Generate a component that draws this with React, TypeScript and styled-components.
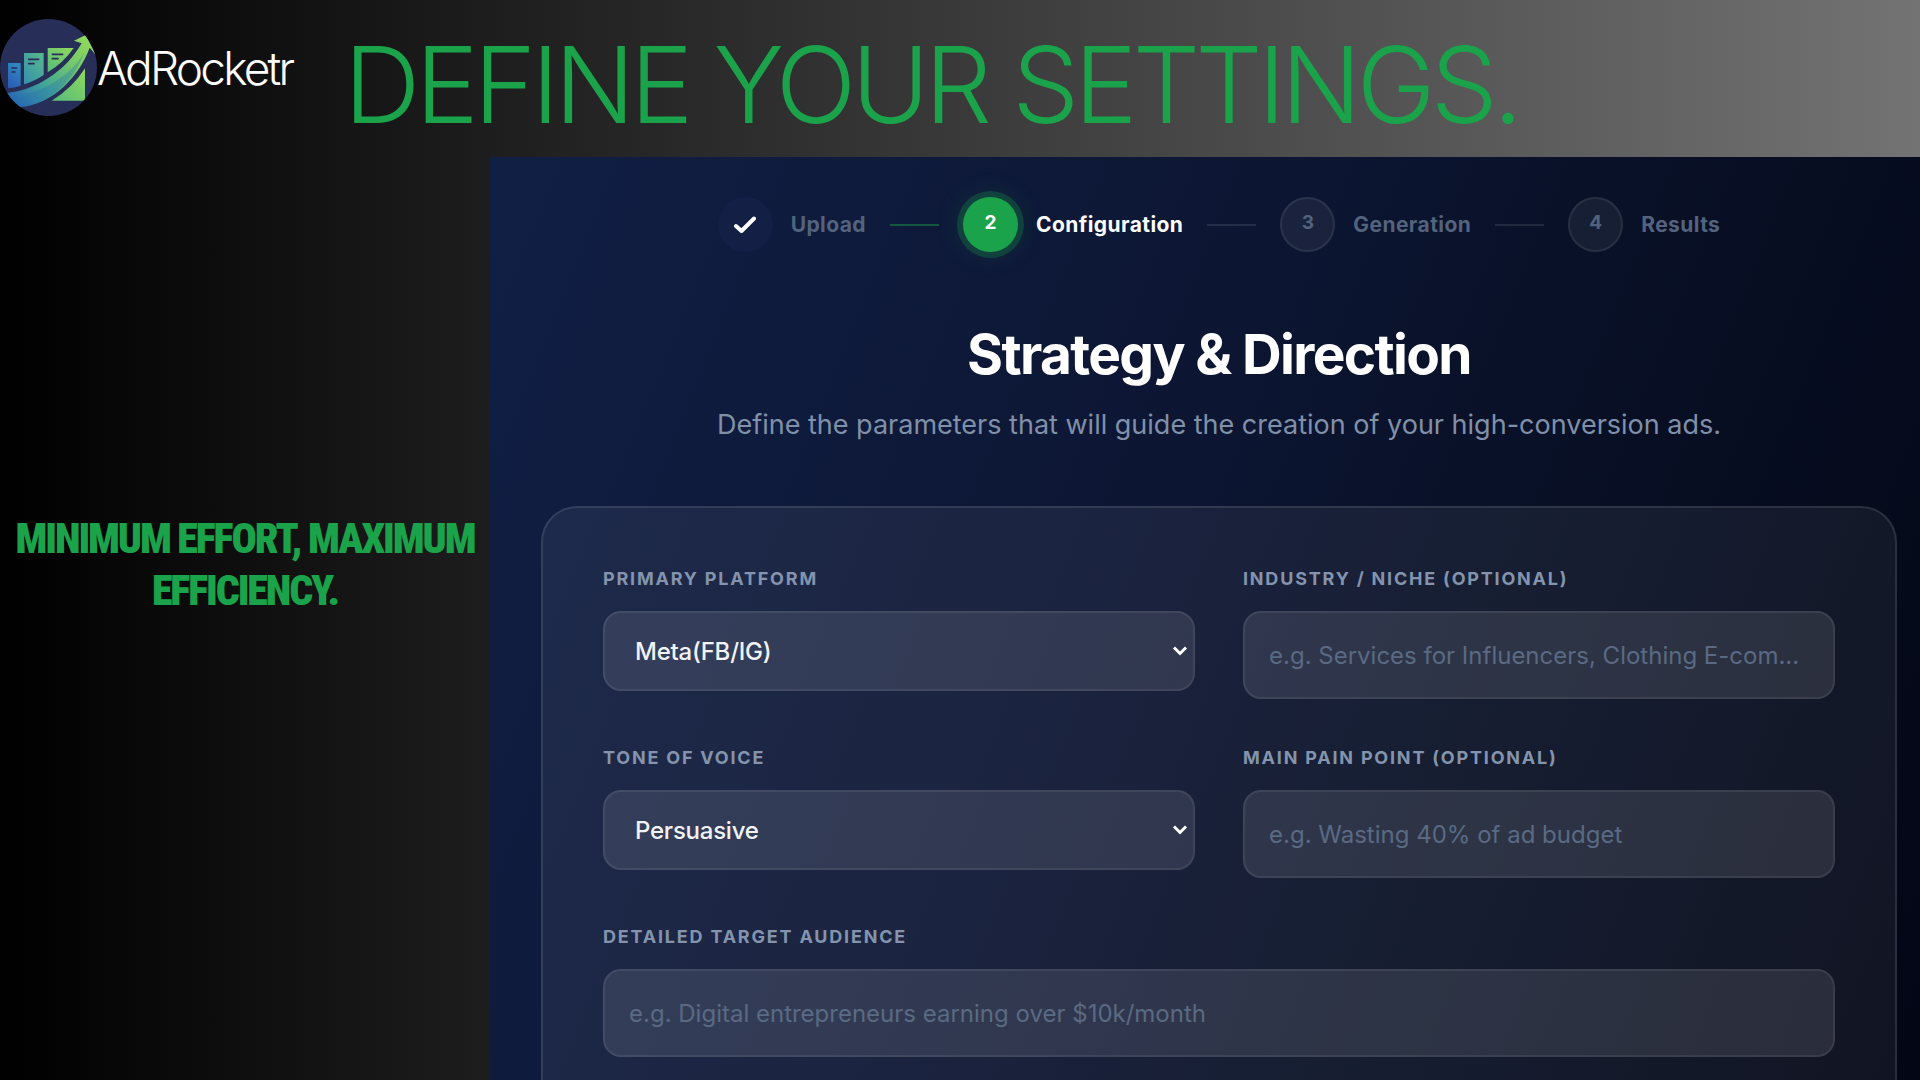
import React from "react";
import styled, { createGlobalStyle, css } from "styled-components";

const sans = `Inter, "Liberation Sans", Arial, sans-serif`;
const green = "#1aa34a";

const GlobalStyle = createGlobalStyle`
  *, *::before, *::after { box-sizing: border-box; }
  body { margin: 0; background: #000; font-family: ${sans}; }
  h1, h2, p { margin: 0; }
`;

const Page = styled.div`
  display: grid;
  grid-template: 157px minmax(0, 1fr) / 490px minmax(0, 1fr);
  height: 100vh;
  overflow: hidden;
  background: linear-gradient(90deg, #000 0%, #737373 100%);
`;

const Header = styled.header`
  grid-column: 1 / -1;
  display: flex;
  align-items: center;
`;

const Brand = styled.a`
  display: flex;
  align-items: center;
  width: 344px;
  padding-bottom: 22px;
  color: #fff;
  font-size: 46px;
  font-weight: 300;
  letter-spacing: -0.06em;
  line-height: 56px;
  text-decoration: none;
`;

const LogoMark = styled.svg`
  flex: none;
  width: 97px;
  height: 97px;
`;

const Headline = styled.h1`
  padding-top: 12px;
  color: ${green};
  font-size: 106px;
  font-weight: 300;
  letter-spacing: -0.045em;
  line-height: 128px;
  white-space: nowrap;
`;

const Aside = styled.aside`
  display: flex;
  align-items: center;
  justify-content: center;
  padding: 0 8px 108px;
`;

const Slogan = styled.p`
  color: ${green};
  font-family: "Roboto Condensed", "Liberation Sans Narrow", "Open Sans Condensed", sans-serif;
  font-size: 42px;
  font-weight: 900;
  letter-spacing: -0.05em;
  line-height: 52px;
  text-align: center;
`;

const Panel = styled.main`
  display: flex;
  flex-direction: column;
  align-items: center;
  padding: 40px 23px 0 51px;
  overflow: hidden;
  background: linear-gradient(112deg, #111f45 0%, #0d1735 40%, #080f24 70%, #030615 100%);
`;

const Steps = styled.ol`
  display: flex;
  align-items: center;
  gap: 24px;
  margin: 0;
  padding: 0;
  list-style: none;
`;

const Step = styled.li`
  display: flex;
  align-items: center;
  gap: 24px;
`;

const StepBody = styled.div<{ $active?: boolean }>`
  display: flex;
  align-items: center;
  gap: 18px;
  color: ${(p) => (p.$active ? "#fff" : "#53637d")};
  font-size: 21px;
  font-weight: 700;
  letter-spacing: 0.02em;
  line-height: 28px;
`;

const stepLooks = {
  done: css`
    background: #131f45;
    color: #fff;
  `,
  active: css`
    background: ${green};
    color: #fff;
    box-shadow: 0 0 0 6px rgba(26, 163, 74, 0.25), 0 0 28px rgba(26, 163, 74, 0.2);
  `,
  todo: css`
    border: 2px solid rgba(255, 255, 255, 0.08);
    background: rgba(255, 255, 255, 0.06);
  `,
};

const StepDot = styled.span<{ $look: keyof typeof stepLooks }>`
  display: flex;
  align-items: center;
  justify-content: center;
  width: 55px;
  height: 55px;
  padding-bottom: 3px;
  border-radius: 50%;
  font-size: 19px;
  font-weight: 700;
  letter-spacing: 0;
  ${(p) => stepLooks[p.$look]}
`;

const StepLine = styled.span<{ $done?: boolean }>`
  width: 49px;
  height: 2px;
  background: ${(p) => (p.$done ? "#14593f" : "rgba(255, 255, 255, 0.1)")};
`;

const Title = styled.h2`
  margin-top: 69px;
  color: #fff;
  font-size: 55px;
  font-weight: 700;
  letter-spacing: -0.03em;
  line-height: 66px;
`;

const Subtitle = styled.p`
  margin-top: 20px;
  color: #8090a8;
  font-size: 27px;
  line-height: 36px;
`;

const Card = styled.form`
  flex: 1 0 auto;
  display: grid;
  grid-template-columns: repeat(2, minmax(0, 1fr));
  align-content: start;
  gap: 47px 48px;
  align-self: stretch;
  margin-top: 63px;
  padding: 59px 60px;
  border: 2px solid rgba(255, 255, 255, 0.1);
  border-bottom: 0;
  border-radius: 36px 36px 0 0;
  background: rgba(255, 255, 255, 0.06);
`;

const Field = styled.div<{ $wide?: boolean }>`
  display: flex;
  flex-direction: column;
  gap: 20px;
  ${(p) => p.$wide && "grid-column: 1 / -1;"}
`;

const Label = styled.label`
  color: #8494ad;
  font-size: 18px;
  font-weight: 700;
  letter-spacing: 0.1em;
  line-height: 24px;
  text-transform: uppercase;
`;

const control = css`
  width: 100%;
  border: 2px solid rgba(255, 255, 255, 0.08);
  border-radius: 18px;
  outline: none;
  background: rgba(255, 255, 255, 0.1);
  font-family: ${sans};
  font-size: 24px;
`;

const TextInput = styled.input`
  ${control}
  height: 88px;
  padding: 0 24px;
  color: #fff;

  &::placeholder {
    color: #5a6a83;
    opacity: 1;
  }
`;

const SelectWrap = styled.div`
  display: grid;
  align-items: center;
  justify-items: end;

  & > * { grid-area: 1 / 1; }
`;

const Select = styled.select`
  ${control}
  height: 80px;
  padding: 0 40px 0 30px;
  color: #f1f3f7;
  appearance: none;
  font-weight: 500;
  letter-spacing: -0.01em;

  option { color: #111; }
`;

const Chevron = styled.svg`
  width: 16px;
  height: 12px;
  margin-right: 7px;
  pointer-events: none;
`;

function Logo() {
  return (
    <LogoMark viewBox="0 0 291 291" aria-hidden="true">
      <defs>
        <linearGradient id="sweep" gradientUnits="userSpaceOnUse" x1="20" y1="250" x2="270" y2="60">
          <stop offset="0" stopColor="#2560b8" />
          <stop offset="0.4" stopColor="#42a795" />
          <stop offset="0.75" stopColor="#78cc66" />
          <stop offset="1" stopColor="#93da5c" />
        </linearGradient>
        <linearGradient id="bar1" x1="0" y1="1" x2="0.4" y2="0">
          <stop offset="0" stopColor="#2a57b5" />
          <stop offset="1" stopColor="#2f86bd" />
        </linearGradient>
        <linearGradient id="bar2" x1="0" y1="1" x2="1" y2="0">
          <stop offset="0" stopColor="#3690ae" />
          <stop offset="1" stopColor="#56b98a" />
        </linearGradient>
        <linearGradient id="bar3" x1="0" y1="1" x2="1" y2="0">
          <stop offset="0" stopColor="#56bb7c" />
          <stop offset="1" stopColor="#8fd95b" />
        </linearGradient>
        <clipPath id="disc"><circle cx="145.5" cy="145.5" r="145.5" /></clipPath>
      </defs>
      <g clipPath="url(#disc)">
        <rect width="291" height="291" fill="#272f58" />
        <path d="M24 132H62V200Q43 206 24 208Z" fill="url(#bar1)" />
        <path d="M72 102H131V168Q103 187 72 196Z" fill="url(#bar2)" />
        <path d="M143 87H221Q190 132 143 160Z" fill="url(#bar3)" />
        <path d="M36 147H50M36 159H45M86 121H116M86 134H102M157 106H188M157 119H174" stroke="#272f58" strokeWidth="5" strokeLinecap="round" />
        <path d="M155 245Q216 209 255 148V236Q255 245 246 245Z" fill="url(#bar3)" />
        <path d="M14 223C105 215 195 160 245 73L222 65L257 48L287 107L269 86C240 165 165 255 60 264Q36 262 14 223Z" fill="url(#sweep)" />
        <path d="M22 235C115 228 210 175 254 98C225 180 150 256 60 266Z" fill="#256db4" opacity="0.32" />
      </g>
    </LogoMark>
  );
}

function SelectField({ id, label, options }: { id: string; label: string; options: string[] }) {
  return (
    <Field>
      <Label htmlFor={id}>{label}</Label>
      <SelectWrap>
        <Select id={id}>
          {options.map((o) => <option key={o}>{o}</option>)}
        </Select>
        <Chevron viewBox="0 0 16 12" fill="none" stroke="#fff" strokeWidth="3" aria-hidden="true">
          <path d="M2 2.5L8 8.5L14 2.5" />
        </Chevron>
      </SelectWrap>
    </Field>
  );
}

function InputField({ id, label, placeholder, wide }: { id: string; label: string; placeholder: string; wide?: boolean }) {
  return (
    <Field $wide={wide}>
      <Label htmlFor={id}>{label}</Label>
      <TextInput id={id} type="text" placeholder={placeholder} />
    </Field>
  );
}

const steps: { name: string; look: keyof typeof stepLooks }[] = [
  { name: "Upload", look: "done" },
  { name: "Configuration", look: "active" },
  { name: "Generation", look: "todo" },
  { name: "Results", look: "todo" },
];

export default function App() {
  return (
    <>
      <GlobalStyle />
      <Page>
        <Header>
          <Brand href="#">
            <Logo />
            AdRocketr
          </Brand>
          <Headline>DEFINE YOUR SETTINGS.</Headline>
        </Header>
        <Aside>
          <Slogan>MINIMUM EFFORT, MAXIMUM EFFICIENCY.</Slogan>
        </Aside>
        <Panel>
          <Steps>
            {steps.map((step, i) => (
              <Step key={step.name}>
                <StepBody $active={step.look === "active"}>
                  <StepDot $look={step.look}>
                    {step.look === "done" ? (
                      <svg width="24" height="20" viewBox="0 0 24 20" fill="none" stroke="#fff" strokeWidth="4" strokeLinecap="round" strokeLinejoin="round" aria-label="Done">
                        <path d="M3 13L8.500 18L21 5.500" />
                      </svg>
                    ) : (
                      i + 1
                    )}
                  </StepDot>
                  {step.name}
                </StepBody>
                {i < steps.length - 1 && <StepLine $done={step.look === "done"} />}
              </Step>
            ))}
          </Steps>
          <Title>Strategy &amp; Direction</Title>
          <Subtitle>Define the parameters that will guide the creation of your high-conversion ads.</Subtitle>
          <Card>
            <SelectField id="platform" label="Primary Platform" options={["Meta(FB/IG)"]} />
            <InputField id="industry" label="Industry / Niche (Optional)" placeholder="e.g. Services for Influencers, Clothing E-com..." />
            <SelectField id="tone" label="Tone of Voice" options={["Persuasive"]} />
            <InputField id="pain" label="Main Pain Point (Optional)" placeholder="e.g. Wasting 40% of ad budget" />
            <InputField id="audience" label="Detailed Target Audience" placeholder="e.g. Digital entrepreneurs earning over $10k/month" wide />
          </Card>
        </Panel>
      </Page>
    </>
  );
}
